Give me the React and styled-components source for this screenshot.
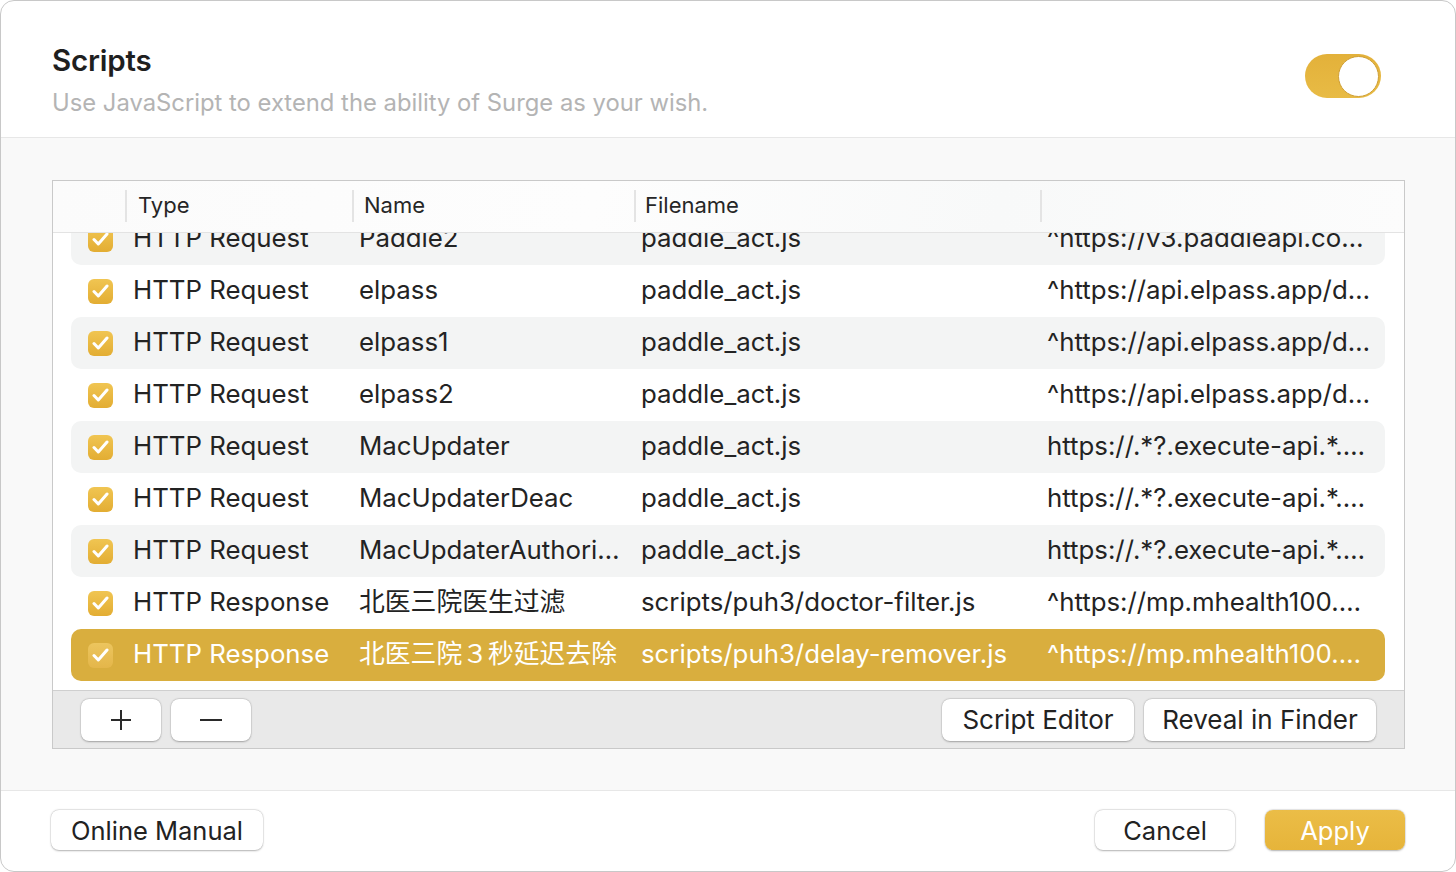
import React from 'react'
import styled, { createGlobalStyle } from 'styled-components'

const GlobalStyle = createGlobalStyle`
  html, body {
    margin: 0;
    padding: 0;
    background: #ffffff;
  }
  * { box-sizing: border-box; }
  body {
    font-family: Inter, "Noto Sans CJK SC", "Noto Sans", sans-serif;
    color: #232323;
    -webkit-font-smoothing: antialiased;
  }
`

const GOLD = '#d9ae3e'

const Window = styled.div`
  width: 1456px;
  height: 872px;
  border: 1px solid #c8c8c8;
  border-radius: 14px;
  overflow: hidden;
  display: flex;
  flex-direction: column;
  background: #fff;`

const Header = styled.div`
  height: 137px;
  flex: none;
  display: flex;
  align-items: center;
  justify-content: space-between;
  padding: 0 74px 0 51px;
  border-bottom: 1px solid #e7e7e7;`

const TitleBlock = styled.div`
  display: flex;
  flex-direction: column;
  gap: 10px;
  margin-top: 22px;`

const Title = styled.div`
  font-size: 29.5px;
  line-height: 36px;
  font-weight: 600;
  color: #1f1f1f;
  letter-spacing: -0.2px;`

const Subtitle = styled.div`
  font-size: 23.8px;
  line-height: 30px;
  color: #b4b4b4;`

const Toggle = styled.div`
  width: 76px;
  height: 44px;
  border-radius: 22px;
  background: linear-gradient(180deg, #e3b13a, #e8bb45);
  display: flex;
  align-items: center;
  justify-content: flex-end;
  padding: 0 2px;
  margin-top: 14px;`

const Knob = styled.div`
  width: 41px;
  height: 41px;
  border-radius: 50%;
  background: #fff;
  border: 1px solid #cf9f34;`

const Body = styled.div`
  flex: 1;
  background: #f9f9f9;
  padding: 42px 50px 41px 51px;
  border-bottom: 1px solid #e7e7e7;
  display: flex;`

const TableBox = styled.div`
  flex: 1;
  border: 1px solid #c9c9c9;
  display: flex;
  flex-direction: column;
  background: #fff;`

const ScrollArea = styled.div`
  flex: 1;
  position: relative;
  overflow: hidden;`

const ColumnHeader = styled.div`
  position: absolute;
  top: 0;
  left: 0;
  right: 0;
  height: 52px;
  display: grid;
  grid-template-columns: 72px 227px 282px 406px 1fr;
  background: linear-gradient(100deg, #fbfbfb 0%, #fdfdfd 40%, #f8f9f9 70%, #fcfcfc 100%);
  border-bottom: 1px solid #e3e3e3;
  z-index: 2;`

const HeaderCell = styled.div`
  position: relative;
  display: flex;
  align-items: center;
  padding-left: ${({ pad }) => pad || 12}px;
  padding-bottom: 3px;
  font-size: 22px;
  color: #262626;
  ${({ sep }) => sep ? `
  &::before {
    content: '';
    position: absolute;
    left: 0;
    top: 9px;
    bottom: 10px;
    width: 2px;
    background: #e4e4e4;
  }` : ''}`

const Rows = styled.div`
  padding: 32px 19px 0 18px;
  display: flex;
  flex-direction: column;`

const Row = styled.div`
  height: 52px;
  border-radius: 10px;
  display: grid;
  grid-template-columns: 62px 226px 282px 406px 1fr;
  align-items: center;
  font-size: 25.8px;
  line-height: 32px;
  color: ${({ selected }) => selected ? '#ffffff' : '#232323'};
  background: ${({ selected, striped }) =>
    selected ? GOLD : striped ? '#f3f4f4' : 'transparent'};`

const Cell = styled.div`
  white-space: nowrap;
  overflow: hidden;
  text-overflow: ellipsis;
  padding-bottom: 3px;
  padding-right: ${({ right }) => right || 10}px;`

const CheckCell = styled.div`
  display: flex;
  padding-left: 17px;`

const Check = styled.div`
  width: 25px;
  height: 25px;
  border-radius: 6px;
  display: flex;
  align-items: center;
  justify-content: center;
  background: ${({ selected }) => selected
    ? 'linear-gradient(180deg, #ecc55e, #e4b64a)'
    : 'linear-gradient(180deg, #f0c552, #e3ad33)'};`

const Toolbar = styled.div`
  height: 58px;
  flex: none;
  border-top: 1px solid #cfcfcf;
  background: #e9e9e9;
  display: flex;
  align-items: center;
  justify-content: space-between;
  padding: 0 28px;`

const ButtonGroup = styled.div`
  display: flex;
  gap: ${({ gap }) => gap || 10}px;`

const Button = styled.button`
  height: ${({ tall }) => tall ? 42 : 40}px;
  min-width: ${({ w }) => w || 0}px;
  padding: 0 18px;
  border: none;
  border-radius: 8px;
  background: ${({ primary }) => primary ? 'linear-gradient(180deg, #ebbd47, #e6b43a)' : '#ffffff'};
  color: ${({ primary }) => primary ? '#ffffff' : '#222222'};
  font-family: inherit;
  font-size: ${({ tall }) => tall ? 26 : 25.5}px;
  box-shadow: 0 0.5px 2px rgba(0, 0, 0, 0.28), 0 0 0 0.5px rgba(0, 0, 0, 0.08);
  display: flex;
  align-items: center;
  justify-content: center;
  white-space: nowrap;
  cursor: default;`

const Footer = styled.div`
  height: 80px;
  flex: none;
  display: flex;
  align-items: center;
  justify-content: space-between;
  padding: 0 50px 2px 50px;`

const CheckMark = () => (
  <svg width="17" height="14" viewBox="0 0 17 14">
    <path d="M2 7.5 L6.3 12 L15 2" fill="none" stroke="#fff" strokeWidth="3"
      strokeLinecap="round" strokeLinejoin="round" />
  </svg>
)

const PlusIcon = () => (
  <svg width="22" height="22" viewBox="0 0 22 22">
    <path d="M11 1 V21 M1 11 H21" stroke="#2a2a2a" strokeWidth="2" />
  </svg>
)

const MinusIcon = () => (
  <svg width="24" height="22" viewBox="0 0 24 22">
    <path d="M1 11 H23" stroke="#2a2a2a" strokeWidth="2" />
  </svg>
)

const scripts = [
  ['HTTP Request', 'Paddle2', 'paddle_act.js', '^https://v3.paddleapi.com/3.2/license/activate'],
  ['HTTP Request', 'elpass', 'paddle_act.js', '^https://api.elpass.app/device/activate'],
  ['HTTP Request', 'elpass1', 'paddle_act.js', '^https://api.elpass.app/device/init'],
  ['HTTP Request', 'elpass2', 'paddle_act.js', '^https://api.elpass.app/device/reset'],
  ['HTTP Request', 'MacUpdater', 'paddle_act.js', 'https://.*?.execute-api.*.amazonaws.com'],
  ['HTTP Request', 'MacUpdaterDeac', 'paddle_act.js', 'https://.*?.execute-api.*.amazonaws.com'],
  ['HTTP Request', 'MacUpdaterAuthorization', 'paddle_act.js', 'https://.*?.execute-api.*.amazonaws.com'],
  ['HTTP Response', '北医三院医生过滤', 'scripts/puh3/doctor-filter.js', '^https://mp.mhealth100.com/doctor'],
  ['HTTP Response', '北医三院３秒延迟去除', 'scripts/puh3/delay-remover.js', '^https://mp.mhealth100.com/delay'],
]

export default function App() {
  return (
    <>
      <GlobalStyle />
      <Window>
        <Header>
          <TitleBlock>
            <Title>Scripts</Title>
            <Subtitle>Use JavaScript to extend the ability of Surge as your wish.</Subtitle>
          </TitleBlock>
          <Toggle><Knob /></Toggle>
        </Header>

        <Body>
          <TableBox>
            <ScrollArea>
              <ColumnHeader>
                <HeaderCell />
                <HeaderCell sep pad={13}>Type</HeaderCell>
                <HeaderCell sep pad={12}>Name</HeaderCell>
                <HeaderCell sep pad={11}>Filename</HeaderCell>
                <HeaderCell sep />
              </ColumnHeader>
              <Rows>
                {scripts.map(([type, name, file, pattern], i) => {
                  const selected = i === scripts.length - 1
                  return (
                    <Row key={i} selected={selected} striped={i % 2 === 0}>
                      <CheckCell>
                        <Check selected={selected}><CheckMark /></Check>
                      </CheckCell>
                      <Cell>{type}</Cell>
                      <Cell right={14}>{name}</Cell>
                      <Cell>{file}</Cell>
                      <Cell right={14}>{pattern}</Cell>
                    </Row>
                  )
                })}
              </Rows>
            </ScrollArea>
            <Toolbar>
              <ButtonGroup>
                <Button tall w={80}><PlusIcon /></Button>
                <Button tall w={80}><MinusIcon /></Button>
              </ButtonGroup>
              <ButtonGroup>
                <Button tall w={192}>Script Editor</Button>
                <Button tall w={232}>Reveal in Finder</Button>
              </ButtonGroup>
            </Toolbar>
          </TableBox>
        </Body>

        <Footer>
          <Button w={212}>Online Manual</Button>
          <ButtonGroup gap={30}>
            <Button w={140}>Cancel</Button>
            <Button w={140} primary>Apply</Button>
          </ButtonGroup>
        </Footer>
      </Window>
    </>
  )
}
